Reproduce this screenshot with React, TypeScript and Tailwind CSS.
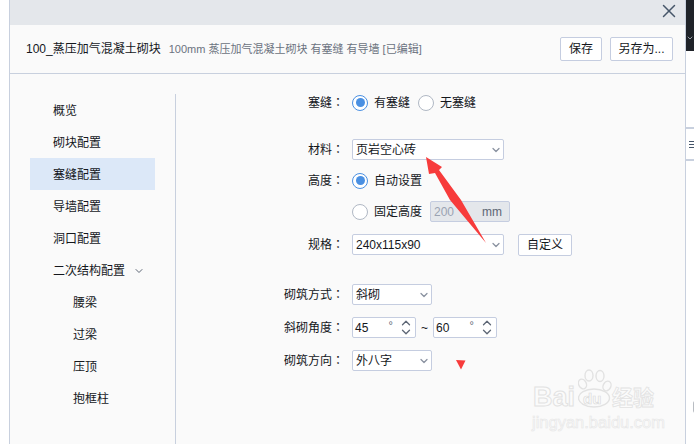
import { ChevronDown, ChevronUp, X } from "lucide-react";
import type { ReactNode } from "react";

const sideItems = [
  { label: "概览" },
  { label: "砌块配置" },
  { label: "塞缝配置", active: true },
  { label: "导墙配置" },
  { label: "洞口配置" },
  { label: "二次结构配置", caret: true },
  { label: "腰梁", sub: true },
  { label: "过梁", sub: true },
  { label: "压顶", sub: true },
  { label: "抱框柱", sub: true },
];

function Radio({ on, label }: { on?: boolean; label: string }) {
  return (
    <span className="flex items-center gap-[6px]">
      <span
        className={`flex h-[16px] w-[16px] items-center justify-center rounded-full bg-white ${on ? "border-[1.5px] border-[#4a90e2]" : "border border-[#b0b8c4]"}`}
      >
        {on ? <span className="h-[9px] w-[9px] rounded-full bg-[#4a90e2]" /> : null}
      </span>
      {label}
    </span>
  );
}

function Select({ value, width }: { value: string; width: string }) {
  return (
    <div className={`flex h-[21px] items-center justify-between rounded-[2px] border border-[#c5cde0] bg-white pl-[3px] pr-[1px] ${width}`}>
      <span>{value}</span>
      <ChevronDown size={12} strokeWidth={2.5} className="text-[#8a92a0]" />
    </div>
  );
}

function Spinner({ value }: { value: string }) {
  return (
    <div className="flex h-[21px] w-[64px] items-center rounded-[2px] border border-[#c5cde0] bg-white pl-[2px]">
      <span className="flex-1">{value}</span>
      <span className="mb-[5px] mr-[6px] text-[11px] text-[#5d6675]">°</span>
      <span className="mr-[2px] flex flex-col">
        <ChevronUp size={14} strokeWidth={2.2} className="-mb-[5px] text-[#5d6675]" />
        <ChevronDown size={14} strokeWidth={2.2} className="text-[#5d6675]" />
      </span>
    </div>
  );
}

function Row({ label, top, children }: { label: string; top: string; children: ReactNode }) {
  return (
    <div className={`flex h-[21px] items-center ${top}`}>
      <span className="w-[176px] pr-[8px] text-right">
        {label}
        <span className="font-['Noto_Sans_CJK_TC']">：</span>
      </span>
      {children}
    </div>
  );
}

export default function App() {
  return (
    <div
      className="relative h-[444px] w-[694px] overflow-hidden bg-white text-[12px] leading-none text-[#14171c]"
      style={{ fontFamily: '"Liberation Sans", "Noto Sans CJK SC", sans-serif' }}
    >
      <div className="absolute inset-y-0 left-[9px] flex w-[677px] flex-col border-x border-[#c8d0de] bg-[#fafafa]">
        <div className="flex h-[25px] shrink-0 items-center justify-end bg-[#e4e7eb] pb-[3px] pr-[5px] text-[#46566a]">
          <X size={22} strokeWidth={1.6} />
        </div>
        <div className="flex h-[49px] shrink-0 items-center border-b border-[#c8d0de] pl-[16px] pr-[12px]">
          <span>100_蒸压加气混凝土砌块</span>
          <span className="ml-[8px] text-[11px] text-[#6b7280]">100mm 蒸压加气混凝土砌块 有塞缝 有导墙 [已编辑]</span>
          <button className="ml-auto h-[24px] w-[42px] rounded-[2px] border border-[#c5cde0] bg-white">保存</button>
          <button className="ml-[8px] h-[24px] w-[63px] rounded-[2px] border border-[#c5cde0] bg-white">另存为...</button>
        </div>
        <div className="flex min-h-0 flex-1 pl-[20px] pt-[20px]">
          <nav className="h-full w-[146px] shrink-0 border-r border-[#c8d0de]">
            <ul className="w-[125px]">
              {sideItems.map((item) => (
                <li
                  key={item.label}
                  className={`flex h-[32px] items-center pt-[2px] ${item.sub ? "pl-[43px]" : "pl-[23px]"} ${item.active ? "bg-[#dce8f8]" : ""}`}
                >
                  {item.label}
                  {item.caret ? <ChevronDown size={12} strokeWidth={2} className="ml-[8px] text-[#5d6675]" /> : null}
                </li>
              ))}
            </ul>
          </nav>
          <div className="-mt-[2px] flex-1">
            <Row label="塞缝" top="">
              <div className="flex gap-[8px]">
                <Radio on label="有塞缝" />
                <Radio label="无塞缝" />
              </div>
            </Row>
            <Row label="材料" top="mt-[26px]">
              <Select value="页岩空心砖" width="w-[152px]" />
            </Row>
            <Row label="高度" top="mt-[10px]">
              <Radio on label="自动设置" />
            </Row>
            <div className="mt-[10px] flex h-[21px] items-center pl-[176px]">
              <Radio label="固定高度" />
              <div className="ml-[8px] flex h-[21px] w-[80px] items-center justify-between rounded-[2px] border border-[#c5cde0] bg-[#e4e7eb] px-[3px] text-[#9aa3b2]">
                <span>200</span>
                <span className="pr-[4px] text-[#5d6675]">mm</span>
              </div>
            </div>
            <Row label="规格" top="mt-[12px]">
              <Select value="240x115x90" width="w-[152px]" />
              <button className="ml-[14px] h-[22px] w-[54px] self-start rounded-[2px] border border-[#c5cde0] bg-white">自定义</button>
            </Row>
            <Row label="砌筑方式" top="mt-[29px]">
              <Select value="斜砌" width="w-[80px]" />
            </Row>
            <Row label="斜砌角度" top="mt-[12px]">
              <Spinner value="45" />
              <span className="w-[17px] text-center">~</span>
              <Spinner value="60" />
            </Row>
            <Row label="砌筑方向" top="mt-[12px]">
              <Select value="外八字" width="w-[80px]" />
            </Row>
          </div>
        </div>
      </div>

      {/* bits of the app window behind the dialog */}
      <div className="absolute right-0 top-0 flex h-[51px] w-[8px] items-end justify-center bg-[#1f2329] pb-[9px] text-[#aeb4bd]">
        <ChevronDown size={8} strokeWidth={2.5} />
      </div>
      <div className="absolute right-0 top-[127px] h-[34px] w-[8px] border-y-2 border-[#c8d0de] pl-[3px] pt-[12px]">
        <div className="flex h-[7px] flex-col justify-between">
          <div className="h-px bg-[#46566a]" />
          <div className="h-px bg-[#46566a]" />
          <div className="h-px bg-[#46566a]" />
        </div>
      </div>
      <div className="absolute right-[-4px] top-[401px] h-[12px] w-[5px] rounded-full bg-[#b8bcc2]" />

      {/* red arrow annotations pasted over the screenshot */}
      <svg className="pointer-events-none absolute left-0 top-0" width="694" height="444" viewBox="0 0 694 444">
        <path d="M426 157L442 167L439 170L461 200L486 243L450 200L435 173L429 174Z" fill="#f73b3b" />
        <path d="M456 360L465.5 360.5L461 369.5Z" fill="#f73b3b" />
      </svg>

      {/* watermark */}
      <div className="pointer-events-none absolute left-[532px] top-[368px] h-[62px] w-[126px] text-[#fbfbfb]">
        <svg className="absolute left-[46px] top-[1px]" width="34" height="39" viewBox="0 0 34 39" fill="#fafafa" stroke="#e2e2e2" strokeWidth="1.4">
          <ellipse cx="4.5" cy="15" rx="3.8" ry="5" transform="rotate(-25 4.5 15)" />
          <ellipse cx="11" cy="6.5" rx="4" ry="5.5" />
          <ellipse cx="22" cy="7" rx="4" ry="5.5" />
          <ellipse cx="29" cy="17" rx="3.8" ry="5" transform="rotate(25 29 17)" />
          <ellipse cx="16" cy="29" rx="15.5" ry="9" />
        </svg>
        <span className="absolute left-[1px] top-[19px] text-[27px] font-bold leading-[20px] [-webkit-text-stroke:1px_#e2e2e2]">Bai</span>
        <span className="absolute left-[51px] top-[25px] text-[15px] font-bold leading-[12px] [-webkit-text-stroke:0.7px_#dcdcdc]">du</span>
        <span className="absolute left-[80px] top-[20px] text-[21px] font-bold leading-[20px] [-webkit-text-stroke:0.8px_#e2e2e2]">经验</span>
        <span className="absolute left-0 top-[47px] text-[16.5px] leading-[14px] [-webkit-text-stroke:0.6px_#e6e6e6]">jingyan.baidu.com</span>
      </div>
    </div>
  );
}
